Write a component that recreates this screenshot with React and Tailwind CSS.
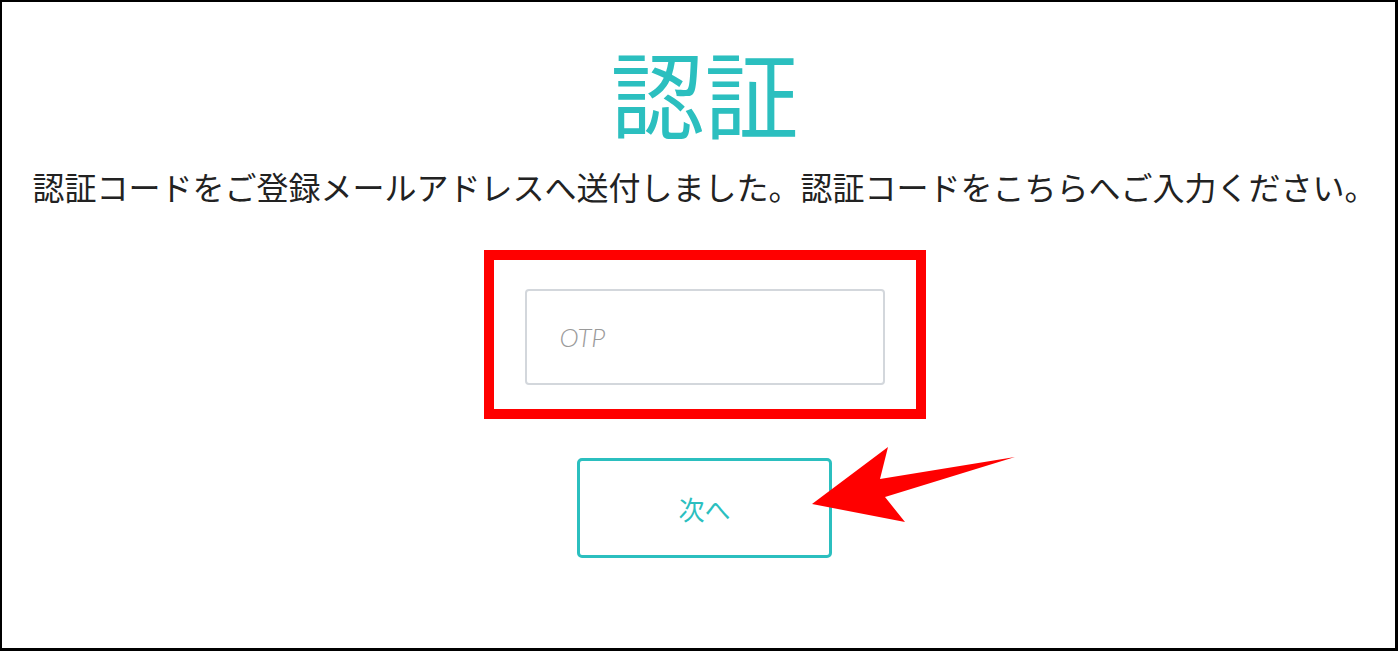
export default function App() {
  return (
    <div className="relative w-[1398px] h-[651px] overflow-hidden bg-white border-2 border-r-[3px] border-b-[3px] border-black font-['Noto_Sans_CJK_JP',sans-serif]">
      <div className="flex flex-col items-center pt-[42px] pl-[12px]">
        {/* title */}
        <h1 className="text-[94px] leading-none font-normal text-[#2bbfbf]">
          認証
        </h1>
        <p className="mt-[32px] text-[32px] leading-none text-[#222]">
          認証コードをご登録メールアドレスへ送付しました。認証コードをこちらへご入力ください。
        </p>

        {/* highlighted input */}
        <div className="mt-[48px] border-[10px] border-[#ff0000] px-[31px] pt-[29px] pb-[24px]">
          <input
            type="text"
            placeholder="OTP"
            className="block w-[360px] h-[96px] rounded-[4px] border-2 border-[#d3d7dc] pl-[33px] text-[26px] italic font-light font-['Lato',sans-serif] placeholder:text-[#9a9a9a] outline-none"
          />
        </div>

        <button className="mt-[39px] w-[255px] h-[100px] rounded-[5px] border-[3px] border-[#2bbfbf] text-[26px] text-[#2bbfbf] bg-white">
          次へ
        </button>
      </div>

      {/* annotation arrow */}
      <svg
        className="absolute left-[805px] top-[440px]"
        width="215"
        height="85"
        viewBox="0 0 215 85"
      >
        <polygon
          points="5,62 81,5 73,37 208,15 78,55 98,80"
          fill="#ff0000"
        />
      </svg>
    </div>
  );
}
